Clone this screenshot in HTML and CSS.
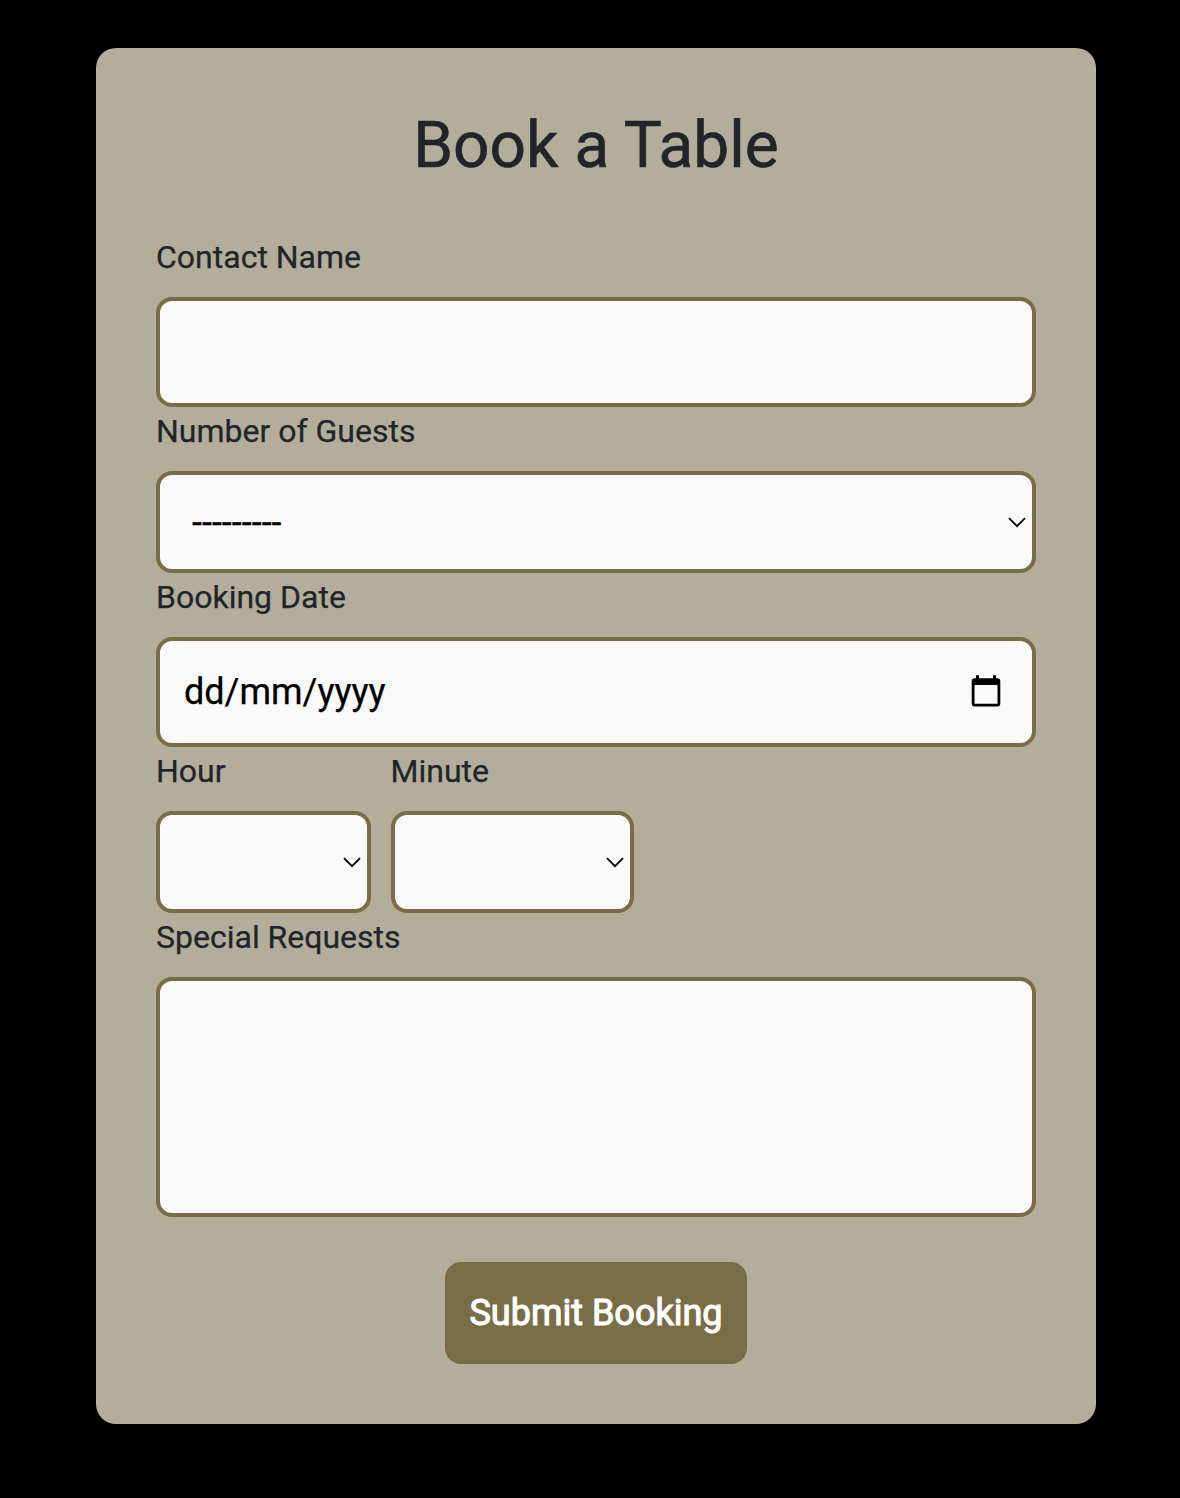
FILE: index.html
```html
<!DOCTYPE html>
<html lang="en">
<head>
<meta charset="utf-8">
<title>Book a Table</title>
<link rel="stylesheet" href="styles.css">
</head>
<body>
<form class="card">
  <h1 class="title">Book a Table</h1>
  <label class="label">Contact Name</label>
  <div class="field field-text"></div>
  <label class="label">Number of Guests</label>
  <div class="field field-select guests"><span class="dashes">---------</span>
    <svg class="chevron" viewBox="0 0 18 11"><path d="M1 1.2 9 9.2 17 1.2"/></svg></div>
  <label class="label">Booking Date</label>
  <div class="field field-text date"><span>dd/mm/yyyy</span>
    <svg class="calendar" viewBox="0 0 30 34"><path fill-rule="evenodd" d="M5 .3h3v2.9h14V.3h3v2.9h1.3a3 3 0 0 1 3 3v22.3a3 3 0 0 1-3 3H3.7a3 3 0 0 1-3-3V6.200a3 3 0 0 1 3-3H5zM3.500 10v18.700h23V10z"/></svg></div>
  <div class="time">
    <div class="hour"><label class="label">Hour</label>
      <div class="field field-select"><svg class="chevron" viewBox="0 0 18 11"><path d="M1 1.2 9 9.2 17 1.2"/></svg></div></div>
    <div class="minute"><label class="label">Minute</label>
      <div class="field field-select"><svg class="chevron" viewBox="0 0 18 11"><path d="M1 1.2 9 9.2 17 1.2"/></svg></div></div>
  </div>
  <label class="label">Special Requests</label>
  <div class="field requests"></div>
  <button class="submit" type="button">Submit Booking</button>
</form>
</body>
</html>
```
FILE: styles.css
```css
* { box-sizing: border-box; }
body { margin: 0; background: #000; color: #212529; font-family: Roboto, sans-serif; -webkit-text-stroke: 0.25px; }
.card { width: 1000px; height: 1376px; margin: 48px 0 0 96px; padding: 60px; background: #b3ad9c; border-radius: 20px; }
.title { margin: 0; height: 125px; font-size: 64px; line-height: 76px; font-weight: 400; text-align: center; -webkit-text-stroke-width: 0.6px; }
.label { display: block; height: 64px; font-size: 32px; line-height: 48px; }
.field { display: flex; align-items: center; border: 4px solid #796d47; border-radius: 16px; background: #f9f9f9; color: #000; }
.field-text { height: 110px; }
.field-select { height: 102px; justify-content: flex-end; padding-right: 6px; }
.guests { justify-content: space-between; padding-left: 32px; font-size: 36px; }
.dashes { padding-top: 1px; }
.date { justify-content: space-between; padding: 0 31px 0 24px; font-size: 36px; }
.chevron { width: 18px; height: 11px; fill: none; stroke: #000; stroke-width: 1.8; }
.calendar { width: 30px; height: 34px; }
.time { display: flex; gap: 20px; }
.hour { width: 215px; }
.minute { width: 243px; }
.minute .label { margin-left: -0.5px; }
.requests { height: 240px; }
.submit { display: block; width: 302px; height: 102px; margin: 45px auto 0; padding: 0; border: 0; border-radius: 16px; background: #796d47; color: #fff; font: 400 36px/102px Roboto, sans-serif; -webkit-text-stroke: 1.1px #fff; }
```
